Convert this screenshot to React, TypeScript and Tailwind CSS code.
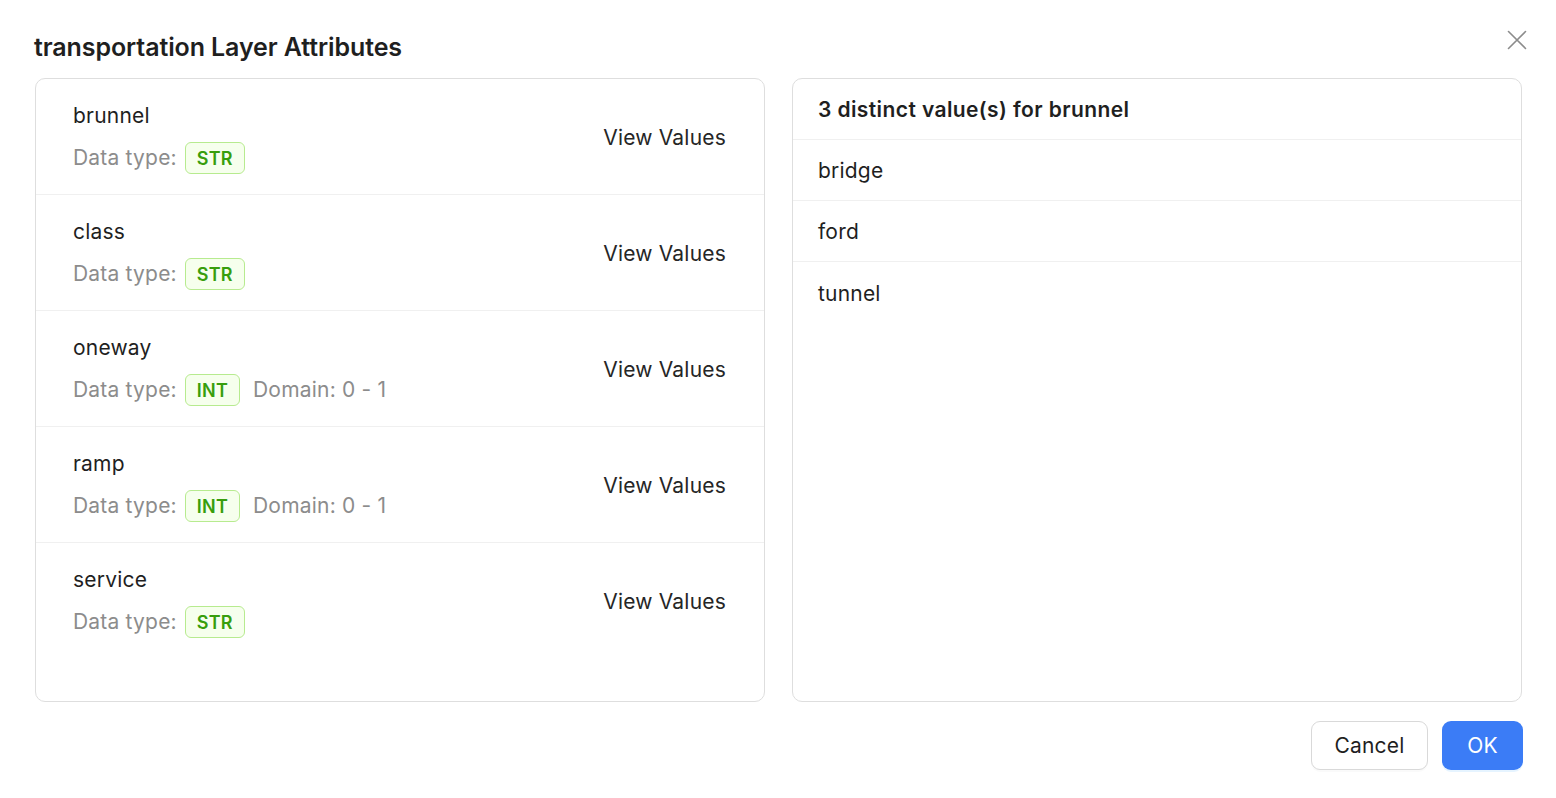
import React, { useState } from "react";

interface Attr {
  name: string;
  type: "STR" | "INT";
  domain?: string;
}

const attrs: Attr[] = [
  { name: "brunnel", type: "STR" },
  { name: "class", type: "STR" },
  { name: "oneway", type: "INT", domain: "0 - 1" },
  { name: "ramp", type: "INT", domain: "0 - 1" },
  { name: "service", type: "STR" },
];

const values: Record<string, string[]> = {
  brunnel: ["bridge", "ford", "tunnel"],
};

const App: React.FC = () => {
  const [selected, setSelected] = useState("brunnel");
  const list = values[selected] || [];

  return (
    <div
      className="w-[1556px] h-[798px] bg-white text-[#1f1f1f] pl-[35px] pr-[34px] pt-[30px] tracking-[0.2px]"
      style={{ fontFamily: "Inter, 'Noto Sans', sans-serif" }}
    >
      <div className="flex items-center justify-between h-[34px]">
        <h2 className="-ml-px mt-[2px] text-[25px] font-semibold tracking-[-0.1px]">
          transportation Layer Attributes
        </h2>
        <button className="-mr-[5px] -mt-[14px] text-[#8c8c8c]">
          <svg width="20" height="20" viewBox="0 0 20 20" fill="none">
            <path
              d="M1.5 1.5L18.5 18.5M18.5 1.5L1.5 18.5"
              stroke="currentColor"
              strokeWidth="1.6"
              strokeLinecap="round"
            />
          </svg>
        </button>
      </div>

      <div className="mt-[14px] grid grid-cols-2 gap-[27px]">
        <div className="h-[624px] rounded-[10px] border border-[#dedede] overflow-hidden">
          {attrs.map((item, index) => (
            <div
              key={item.name}
              className={`h-[116px] flex items-center justify-between pl-[37px] pr-[38px] ${
                index < attrs.length - 1 ? "border-b border-[#f0f0f0]" : ""
              }`}
            >
              <div className="self-start pt-[23px]">
                <p className="text-[21px] leading-[28px]">{item.name}</p>
                <div className="mt-[12px] flex items-center text-[21px] text-[#8c8c8c]">
                  <span>Data type:</span>
                  <span className="ml-[8px] h-[32px] px-[11px] flex items-center rounded-[6px] border border-[#b7eb8f] bg-[#f6ffed] text-[18px] font-semibold text-[#389e0d]">
                    {item.type}
                  </span>
                  {item.domain && (
                    <span className="ml-[13px]">Domain: {item.domain}</span>
                  )}
                </div>
              </div>
              <button
                className="mt-[2px] text-[21px] text-[#262626]"
                onClick={() => setSelected(item.name)}
              >
                View Values
              </button>
            </div>
          ))}
        </div>

        <div className="h-[624px] rounded-[10px] border border-[#dedede] overflow-hidden">
          <div className="h-[61px] flex items-center pt-[2px] px-[25px] border-b border-[#f0f0f0] text-[21px] font-semibold tracking-[0.4px]">
            {list.length} distinct value(s) for {selected}
          </div>
          {list.map((v, index) => (
            <div
              key={v}
              className={`h-[61px] flex items-center pt-[2px] px-[25px] text-[21px] ${
                index < list.length - 1 ? "border-b border-[#f0f0f0]" : ""
              }`}
            >
              {v}
            </div>
          ))}
        </div>
      </div>

      <div className="mt-[19px] flex justify-end gap-[14px] -mr-px">
        <button className="h-[49px] w-[117px] rounded-[9px] border border-[#d9d9d9] bg-white text-[21px] text-[#1f1f1f] shadow-[0_2px_0_rgba(0,0,0,0.02)]">
          Cancel
        </button>
        <button className="h-[49px] w-[81px] rounded-[9px] bg-[#3b7cf6] text-[21px] text-white shadow-[0_2px_0_rgba(5,145,255,0.1)]">
          OK
        </button>
      </div>
    </div>
  );
};

export default App;
